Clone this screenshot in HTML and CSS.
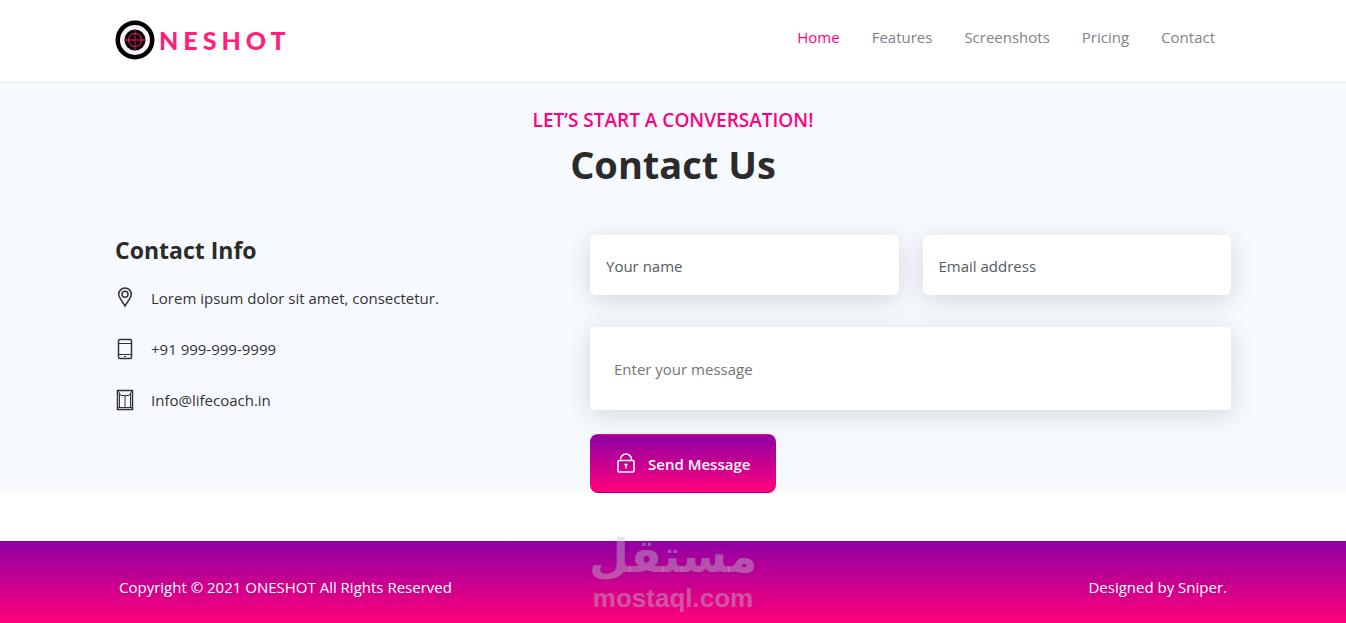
FILE: index.html
```
<!DOCTYPE html>
<html lang="en">
<head>
    <meta charset="UTF-8">
    <meta name="viewport" content="width=device-width, initial-scale=1.0">
    <title>Oneshot - Contact</title>
    <link rel="stylesheet" href="styles.css">
</head>
<body>

    <header class="header">
        <div class="container header-inner">
            <a class="logo" href="#">
                <svg class="logo-icon" viewBox="0 0 40 40" aria-hidden="true">
                    <circle cx="20" cy="20" r="19.5" fill="#000"/>
                    <circle cx="20" cy="20" r="15" fill="#f4f4fb"/>
                    <circle cx="20" cy="20" r="10.5" fill="#0b0307"/>
                    <g fill="none" stroke="#ff1f7d">
                        <circle cx="20" cy="20" r="6.5" stroke-width="1"/>
                        <path d="M9 20h22" stroke-width="1"/>
                        <path d="M20 9v22" stroke-width="1" opacity="0.7"/>
                    </g>
                </svg>
                <span class="logo-text">NESHOT</span>
            </a>
            <nav class="nav">
                <a class="active" href="#home">Home</a>
                <a href="#features">Features</a>
                <a href="#screenshots">Screenshots</a>
                <a href="#pricing">Pricing</a>
                <a href="#contact">Contact</a>
            </nav>
        </div>
    </header>

    <section class="contact" id="contact">
        <div class="container">
            <div class="title">
                <h4>LET’S START A CONVERSATION!</h4>
                <h2>Contact Us</h2>
            </div>

            <div class="contact-row">
                <div class="contact-info">
                    <h3>Contact Info</h3>
                    <ul>
                        <li>
                            <svg class="icon" viewBox="0 0 20 22" aria-hidden="true">
                                <path d="M10 19C8 15 3.700 11 3.700 7.300a6.300 6.300 0 0 1 12.600 0C16.300 11 12 15 10 19z"/>
                                <circle cx="10" cy="7.300" r="3"/>
                            </svg>
                            <span>Lorem ipsum dolor sit amet, consectetur.</span>
                        </li>
                        <li>
                            <svg class="icon" viewBox="0 0 20 22" aria-hidden="true">
                                <rect x="3.500" y="1.500" width="13" height="19" rx="1.500"/>
                                <path d="M3.500 5.500h13M3.500 16.500h13M9 18.500h2" stroke-width="1"/>
                            </svg>
                            <span>+91 999-999-9999</span>
                        </li>
                        <li>
                            <svg class="icon" viewBox="0 0 20 22" aria-hidden="true">
                                <path d="M2.500 1.500h15v19h-15z"/>
                                <path d="M4.500 4v14.500M15.500 4v14.500M3 18.500h14M3 2l3 4.500h8L17 2M10 6.500v12" stroke-width="1"/>
                            </svg>
                            <span>Info@lifecoach.in</span>
                        </li>
                    </ul>
                </div>

                <form class="contact-form">
                    <input type="text" name="name" placeholder="Your name" aria-label="Your name">
                    <input type="email" name="email" placeholder="Email address" aria-label="Email address">
                    <textarea name="message" placeholder="Enter your message" aria-label="Enter your message"></textarea>
                    <button type="submit">
                        <svg class="icon" viewBox="0 0 20 22" aria-hidden="true">
                            <rect x="2" y="7.500" width="16" height="11.500" rx="1"/>
                            <path d="M4.500 6.500a5.500 5.500 0 0 1 11 0v1M10 11v4.500M8.500 11.500h3"/>
                        </svg>
                        Send Message
                    </button>
                </form>
            </div>
        </div>
    </section>

    <footer class="footer">
        <div class="container footer-inner">
            <p>Copyright © 2021 ONESHOT All Rights Reserved</p>
            <p>Designed by Sniper.</p>
        </div>
        <!-- Watermark on top of the footer -->
        <div class="watermark">
            <span class="watermark-ar" lang="ar" dir="rtl">مستقل</span>
            <span class="watermark-en">mostaql.com</span>
        </div>
    </footer>

</body>
</html>
```
FILE: styles.css
```
* {
    box-sizing: border-box;
}

/* General body styling */
body {
    margin: 0;
    font-family: 'Open Sans', 'Noto Sans', sans-serif;
    font-size: 15px;
    line-height: 24px;
    color: #333;
    background-color: #fff;
}

h2, h3, h4, p, ul {
    margin: 0;
    padding: 0;
}

a {
    text-decoration: none;
}

.container {
    width: 100%;
    max-width: 1140px;
    margin: 0 auto;
    padding: 0 12px;
}

/* Header */
.header {
    border-bottom: 1px solid #e9ecef;
}

.header-inner {
    display: flex;
    justify-content: space-between;
    align-items: flex-start;
    padding-top: 20px;
    padding-bottom: 22px;
}

.logo {
    display: flex;
    align-items: center;
    gap: 4px;
}

.logo-icon {
    width: 40px;
    height: 40px;
}

.logo-text {
    font-family: 'Lato', sans-serif;
    font-size: 25px;
    font-weight: 900;
    letter-spacing: 5px;
    color: #ff1f7d;
}

.nav {
    display: flex;
    gap: 32px;
    padding: 5px 16px;
}

.nav a {
    color: #80828c;
}

.nav a.active {
    color: #ff0080;
}

/* Contact section */
.contact {
    background-color: #f6faff;
    padding-top: 24px;
}

.title {
    text-align: center;
    margin-bottom: 44px;
}

.title h4 {
    font-size: 19px;
    font-weight: 600;
    line-height: 26px;
    color: #ff0080;
}

.title h2 {
    margin-top: 4px;
    font-size: 38px;
    font-weight: 700;
    line-height: 54px;
    color: #2b2b2b;
}

.contact-row {
    display: grid;
    grid-template-columns: 5fr 7fr;
    margin: 0 -12px;
}

.contact-info,
.contact-form {
    padding: 0 12px;
}

.contact-info h3 {
    font-size: 23px;
    font-weight: 700;
    line-height: 30px;
    color: #2b2b2b;
}

.contact-info ul {
    list-style: none;
    display: flex;
    flex-direction: column;
    gap: 27px;
    margin-top: 21px;
}

.contact-info li {
    display: flex;
    align-items: center;
    gap: 16px;
}

.icon {
    width: 20px;
    height: 22px;
    fill: none;
    stroke: currentColor;
    stroke-width: 1.5;
}

/* Form */
.contact-form {
    display: grid;
    grid-template-columns: 1fr 1fr;
    column-gap: 24px;
    row-gap: 32px;
}

.contact-form input,
.contact-form textarea {
    width: 100%;
    border: none;
    border-radius: 6px;
    background-color: #fff;
    box-shadow: 0 5px 24px rgba(0, 0, 0, 0.14);
    font: inherit;
    color: #333;
}

.contact-form input {
    height: 60px;
    padding: 2px 16px 0;
}

.contact-form textarea {
    display: block;
    grid-column: 1 / -1;
    height: 83px;
    padding: 30px 24px;
    border-radius: 4px;
    resize: none;
    overflow: hidden;
}

.contact-form input::placeholder {
    color: #555a60;
}

.contact-form textarea::placeholder {
    color: #757575;
}

.contact-form button {
    grid-column: 1 / -1;
    justify-self: start;
    display: flex;
    align-items: center;
    gap: 12px;
    height: 59px;
    margin-top: -8px;
    padding: 0 25px;
    border: 1px solid transparent;
    border-radius: 8px;
    background-image: linear-gradient(#8f00a5, #ff007a);
    font: inherit;
    font-weight: 600;
    color: #fff;
    cursor: pointer;
}

/* Footer */
.footer {
    position: relative;
    margin-top: 48px;
    background-image: linear-gradient(#8f00a5, #ff007a);
    color: #fff;
}

.footer-inner {
    display: flex;
    justify-content: space-between;
    padding: 34px 16px 24px;
}

.watermark {
    position: absolute;
    top: -12px;
    left: 50%;
    transform: translateX(-50%);
    display: flex;
    flex-direction: column;
    align-items: center;
    color: rgba(190, 200, 205, 0.42);
    font-weight: 700;
    pointer-events: none;
}

.watermark-ar {
    font-family: 'DejaVu Sans', sans-serif;
    font-size: 46px;
    line-height: 54px;
}

.watermark-en {
    font-family: 'Liberation Sans', sans-serif;
    font-size: 26px;
    line-height: 30px;
}
```
